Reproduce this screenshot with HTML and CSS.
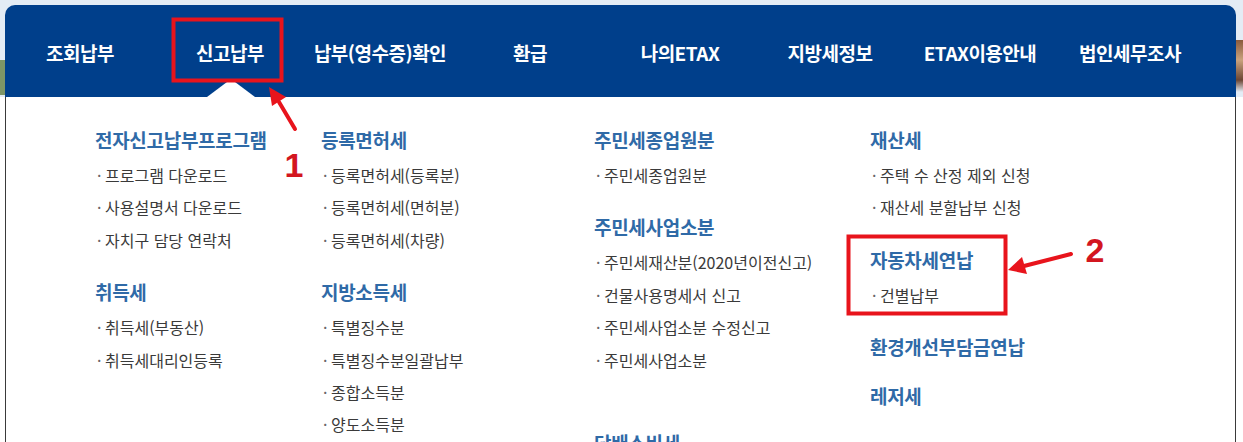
FILE: index.html
```html
<!DOCTYPE html>
<html lang="ko">
<head>
    <meta charset="UTF-8">
    <meta name="viewport" content="width=device-width, initial-scale=1.0">
    <title>신고납부 메뉴</title>
    <link rel="stylesheet" href="styles.css">
</head>
<body>
    <div class="menu-wrap">
        <nav class="gnb">
            <a class="gnb-item">조회납부</a>
            <a class="gnb-item active">신고납부</a>
            <a class="gnb-item">납부(영수증)확인</a>
            <a class="gnb-item">환급</a>
            <a class="gnb-item">나의ETAX</a>
            <a class="gnb-item">지방세정보</a>
            <a class="gnb-item">ETAX이용안내</a>
            <a class="gnb-item">법인세무조사</a>
        </nav>

        <div class="sub-panel">
            <div class="sub-col">
                <div class="group">
                    <h3>전자신고납부프로그램</h3>
                    <ul>
                        <li>프로그램 다운로드</li>
                        <li>사용설명서 다운로드</li>
                        <li>자치구 담당 연락처</li>
                    </ul>
                </div>
                <div class="group">
                    <h3>취득세</h3>
                    <ul>
                        <li>취득세(부동산)</li>
                        <li>취득세대리인등록</li>
                    </ul>
                </div>
            </div>

            <div class="sub-col">
                <div class="group">
                    <h3>등록면허세</h3>
                    <ul>
                        <li>등록면허세(등록분)</li>
                        <li>등록면허세(면허분)</li>
                        <li>등록면허세(차량)</li>
                    </ul>
                </div>
                <div class="group">
                    <h3>지방소득세</h3>
                    <ul>
                        <li>특별징수분</li>
                        <li>특별징수분일괄납부</li>
                        <li>종합소득분</li>
                        <li>양도소득분</li>
                    </ul>
                </div>
            </div>

            <div class="sub-col">
                <div class="group">
                    <h3>주민세종업원분</h3>
                    <ul>
                        <li>주민세종업원분</li>
                    </ul>
                </div>
                <div class="group">
                    <h3>주민세사업소분</h3>
                    <ul>
                        <li>주민세재산분(2020년이전신고)</li>
                        <li>건물사용명세서 신고</li>
                        <li>주민세사업소분 수정신고</li>
                        <li>주민세사업소분</li>
                    </ul>
                </div>
                <div class="group group-far">
                    <h3>담배소비세</h3>
                </div>
            </div>

            <div class="sub-col">
                <div class="group">
                    <h3>재산세</h3>
                    <ul>
                        <li>주택 수 산정 제외 신청</li>
                        <li>재산세 분할납부 신청</li>
                    </ul>
                </div>
                <div class="group">
                    <h3>자동차세연납</h3>
                    <ul>
                        <li>건별납부</li>
                    </ul>
                </div>
                <div class="group group-single">
                    <h3>환경개선부담금연납</h3>
                </div>
                <div class="group group-single">
                    <h3>레저세</h3>
                </div>
            </div>
        </div>
    </div>

    <!-- 캡처 위 표시 (빨간 박스, 화살표, 번호) -->
    <svg class="marks" width="1243" height="442" viewBox="0 0 1243 442">
        <rect x="173.5" y="19.5" width="108" height="61" fill="none" stroke="#e8141c" stroke-width="4"/>
        <rect x="848.5" y="236.5" width="157" height="77" fill="none" stroke="#e8141c" stroke-width="4"/>

        <line x1="295" y1="129" x2="279" y2="102" stroke="#e8141c" stroke-width="4" stroke-linecap="round"/>
        <polygon points="269,87 286,97 272,106" fill="#e8141c"/>

        <line x1="1071" y1="254" x2="1024" y2="266" stroke="#e8141c" stroke-width="4" stroke-linecap="round"/>
        <polygon points="1008,270 1022,257 1027,274" fill="#e8141c"/>

        <text class="mark-num" x="294" y="177">1</text>
        <text class="mark-num" x="1095" y="262">2</text>
    </svg>
</body>
</html>
```

FILE: styles.css
```css
html {
    overflow: hidden;
}

body {
    margin: 0;
    position: relative;
    width: 1243px;
    height: 442px;
    overflow: hidden;
    font-family: 'Noto Sans CJK KR', 'Noto Sans', sans-serif;
    background:
        linear-gradient(to bottom, transparent 60px, #7d9566 60px, #7d9566 95px, transparent 95px) left top / 5px 100% no-repeat,
        linear-gradient(to bottom, transparent 40px, #8a5a3c 40px, #c9a27d 60px, #6b4634 80px, transparent 92px) right top / 7px 100% no-repeat,
        linear-gradient(to bottom, #e4ecf5 0, #e4ecf5 97px, #fff 97px);
}

.menu-wrap {
    margin: 5px 7px 0 5px;
}

/* 상단 메뉴 */
.gnb {
    display: flex;
    height: 92px;
    background-color: #003f8b;
    border-radius: 10px 10px 0 0;
}

.gnb-item {
    position: relative;
    flex: 0 0 150px;
    display: flex;
    justify-content: center;
    align-items: center;
    padding-top: 3px;
    box-sizing: border-box;
    color: #fff;
    font-size: 19px;
    font-weight: bold;
    letter-spacing: -0.5px;
    white-space: nowrap;
}

.gnb-item.active::after {
    content: "";
    position: absolute;
    bottom: 0;
    left: 50%;
    margin-left: -23px;
    border-left: 24px solid transparent;
    border-right: 24px solid transparent;
    border-bottom: 18px solid #fff;
}

/* 하위 메뉴 */
.sub-panel {
    display: grid;
    grid-template-columns: 226px 273px 276px 1fr;
    height: 345px;
    padding: 28px 0 0 89px;
    box-sizing: border-box;
    background-color: #fff;
    border-left: 1px solid #3a3a3a;
    border-right: 1px solid #3a3a3a;
    overflow: hidden;
}

.group {
    margin-bottom: 21px;
}

.group-single {
    margin-bottom: 19px;
}

.group-far {
    margin-top: 52px;
}

.group h3 {
    margin: 0;
    color: #2f6aa7;
    font-size: 19px;
    font-weight: bold;
    line-height: 30px;
    letter-spacing: -0.3px;
}

.group ul {
    list-style: none;
    margin: 4px 0 0;
    padding: 0;
}

.group li {
    color: #3a3a3a;
    font-size: 16px;
    line-height: 32.4px;
    white-space: nowrap;
}

.group li::before {
    content: "·";
    display: inline-block;
    width: 8px;
    margin-left: 2px;
    color: #666;
}

/* 표시 레이어 */
.marks {
    position: absolute;
    left: 0;
    top: 0;
    pointer-events: none;
}

.mark-num {
    font-family: 'Liberation Sans', Arial, sans-serif;
    font-size: 34px;
    font-weight: bold;
    fill: #d3161f;
    text-anchor: middle;
}
```
